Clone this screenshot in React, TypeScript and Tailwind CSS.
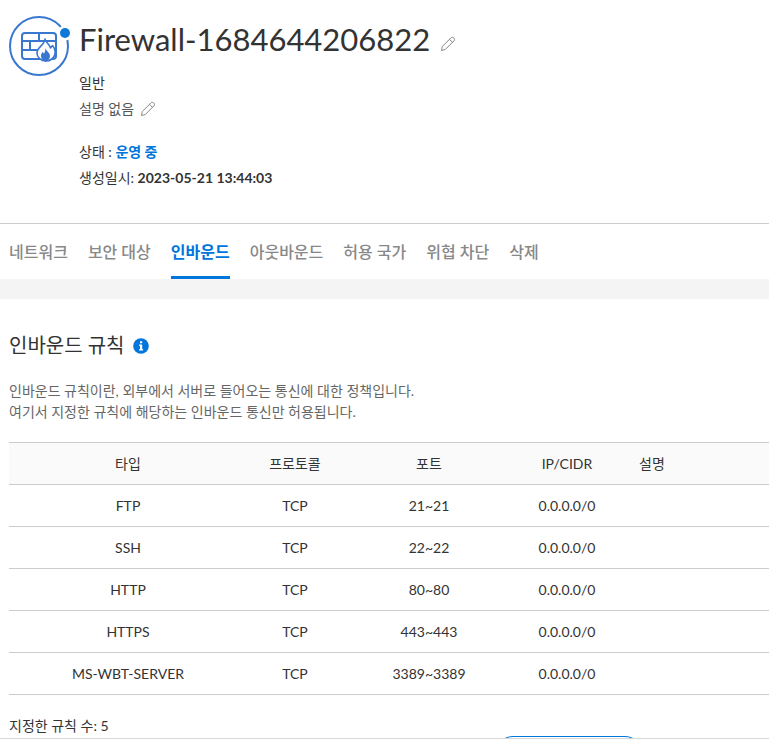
type Rule = {
  type: string
  protocol: string
  port: string
  cidr: string
  description: string
}

const tabs = ['네트워크', '보안 대상', '인바운드', '아웃바운드', '허용 국가', '위협 차단', '삭제']

const rules: Rule[] = [
  { type: 'FTP', protocol: 'TCP', port: '21~21', cidr: '0.0.0.0/0', description: '' },
  { type: 'SSH', protocol: 'TCP', port: '22~22', cidr: '0.0.0.0/0', description: '' },
  { type: 'HTTP', protocol: 'TCP', port: '80~80', cidr: '0.0.0.0/0', description: '' },
  { type: 'HTTPS', protocol: 'TCP', port: '443~443', cidr: '0.0.0.0/0', description: '' },
  { type: 'MS-WBT-SERVER', protocol: 'TCP', port: '3389~3389', cidr: '0.0.0.0/0', description: '' },
]

function FirewallIcon() {
  return (
    <svg width="62" height="62" viewBox="0 0 62 62" fill="none" className="shrink-0" aria-hidden="true">
      <circle cx="31" cy="31" r="29" stroke="#3a78d0" strokeWidth="2" />
      <circle cx="57" cy="18" r="7.5" fill="#fff" />
      <circle cx="57" cy="18" r="5" fill="#0f78d8" />
      <g stroke="#3a78d0" strokeWidth="2">
        <rect x="14" y="18" width="34" height="26" rx="3" />
        <path d="M14 26h34M14 35h17M31 18v8M22 26v9M39 26v-1M31 35v9" />
      </g>
      <path
        d="M37 24c.3 3 4.500 5 5.500 9l2-2.500c2 2.500 3 5 2.500 8.500-.8 4-4.500 7-9 7-5 0-9-3.500-9-8 0-6 7.500-7.500 8-14z"
        fill="#fff"
        stroke="#3a78d0"
        strokeWidth="1.6"
        strokeLinejoin="round"
      />
      <path d="M37.500 33c.5 3 4.500 4.500 4.500 8 0 3-2 4.500-4.500 6-2.500-1.500-4.500-3-4.500-6 0-2 .8-3 1.500-4l1.500 1.500c1-1.500 1.500-3.500 1.500-5.500z" fill="#3a78d0" />
    </svg>
  )
}

function PencilIcon() {
  return (
    <svg width="16" height="16" viewBox="0 0 16 16" fill="none" stroke="#888" strokeWidth="1" strokeLinejoin="round" aria-hidden="true">
      <path d="M1.500 14.500l.8-4L10.800 2c1-1 2-1 3 0s1 2 0 3l-8.500 8.500z" />
      <path d="M9.500 3.300l3.200 3.200" />
    </svg>
  )
}

function InfoIcon() {
  return (
    <svg width="16" height="16" viewBox="0 0 16 16" aria-hidden="true">
      <circle cx="8" cy="8" r="7.8" fill="#0075db" />
      <path d="M7 3.200h2.200v2H7zM6 6.500h3.200v4.800h1V12.500H6v-1.200h1V7.700H6z" fill="#fff" />
    </svg>
  )
}

export default function App() {
  const activeTab = '인바운드'

  return (
    <div className="bg-white font-[Lato,'Noto_Sans_CJK_KR',sans-serif] text-sm text-[#333]">
      <header className="flex gap-2 border-b border-[#ccc] pt-[15px] pb-8 pl-2">
        <FirewallIcon />
        <div className="pl-px">
          <div className="flex items-center gap-2.5">
            <h1 className="text-[31px] leading-12">Firewall-1684644206822</h1>
            <button type="button" aria-label="이름 수정" className="pt-2.5">
              <PencilIcon />
            </button>
          </div>
          <p className="mt-2 leading-6">일반</p>
          <div className="mt-0.5 flex items-center gap-1.5 leading-6 text-[#555]">
            <span>설명 없음</span>
            <button type="button" aria-label="설명 수정">
              <PencilIcon />
            </button>
          </div>
          <p className="mt-[18px] leading-[26px]">
            상태 : <strong className="text-[#0075db]">운영 중</strong>
          </p>
          <p className="leading-[26px]">
            생성일시: <strong>2023-05-21 13:44:03</strong>
          </p>
        </div>
      </header>

      <nav className="flex gap-5 pl-[9px] text-base">
        {tabs.map((tab) => (
          <a
            key={tab}
            href="#"
            className={`border-b-3 pt-4 pb-3 leading-6 ${
              tab === activeTab ? 'border-[#0075db] font-bold text-[#0075db]' : 'border-transparent font-medium text-[#888]'
            }`}
          >
            {tab}
          </a>
        ))}
      </nav>
      <div className="h-5 bg-[#f4f4f4]" />

      <main className="pt-7 pl-[9px]">
        <div className="flex items-center gap-2">
          <h2 className="text-xl leading-9">인바운드 규칙</h2>
          <button type="button" aria-label="도움말" className="pt-0.5">
            <InfoIcon />
          </button>
        </div>
        <p className="mt-[17px] leading-[21px] text-[#666]">
          인바운드 규칙이란, 외부에서 서버로 들어오는 통신에 대한 정책입니다.
          <br />
          여기서 지정한 규칙에 해당하는 인바운드 통신만 허용됩니다.
        </p>

        <table className="mt-5 w-full table-fixed border-collapse text-center leading-[21px]">
          <colgroup>
            <col className="w-[238px]" />
            <col className="w-[96px]" />
            <col className="w-[172px]" />
            <col className="w-[104px]" />
            <col />
          </colgroup>
          <thead>
            <tr className="h-[42px] border-y border-[#ccc] bg-[#fafafa]">
              <th className="font-normal">타입</th>
              <th className="font-normal">프로토콜</th>
              <th className="font-normal">포트</th>
              <th className="font-normal">IP/CIDR</th>
              <th className="pl-5 text-left font-normal">설명</th>
            </tr>
          </thead>
          <tbody>
            {rules.map((rule) => (
              <tr key={rule.type} className="h-[42px] border-b border-[#ccc]">
                <td>{rule.type}</td>
                <td>{rule.protocol}</td>
                <td>{rule.port}</td>
                <td>{rule.cidr}</td>
                <td className="pl-5 text-left">{rule.description}</td>
              </tr>
            ))}
          </tbody>
        </table>

        <p className="mt-5 leading-[21px]">지정한 규칙 수: 5</p>
      </main>

      {/* only the top edge of the button shows above the footer line */}
      <div className="flex h-[2px] justify-end overflow-hidden pr-[126px]">
        <button type="button" aria-label="규칙 수정" className="h-9 w-[148px] shrink-0 rounded-[18px] border border-[#0075db]" />
      </div>
      <footer className="border-t border-[#d8d8d8] pb-2" />
    </div>
  )
}
